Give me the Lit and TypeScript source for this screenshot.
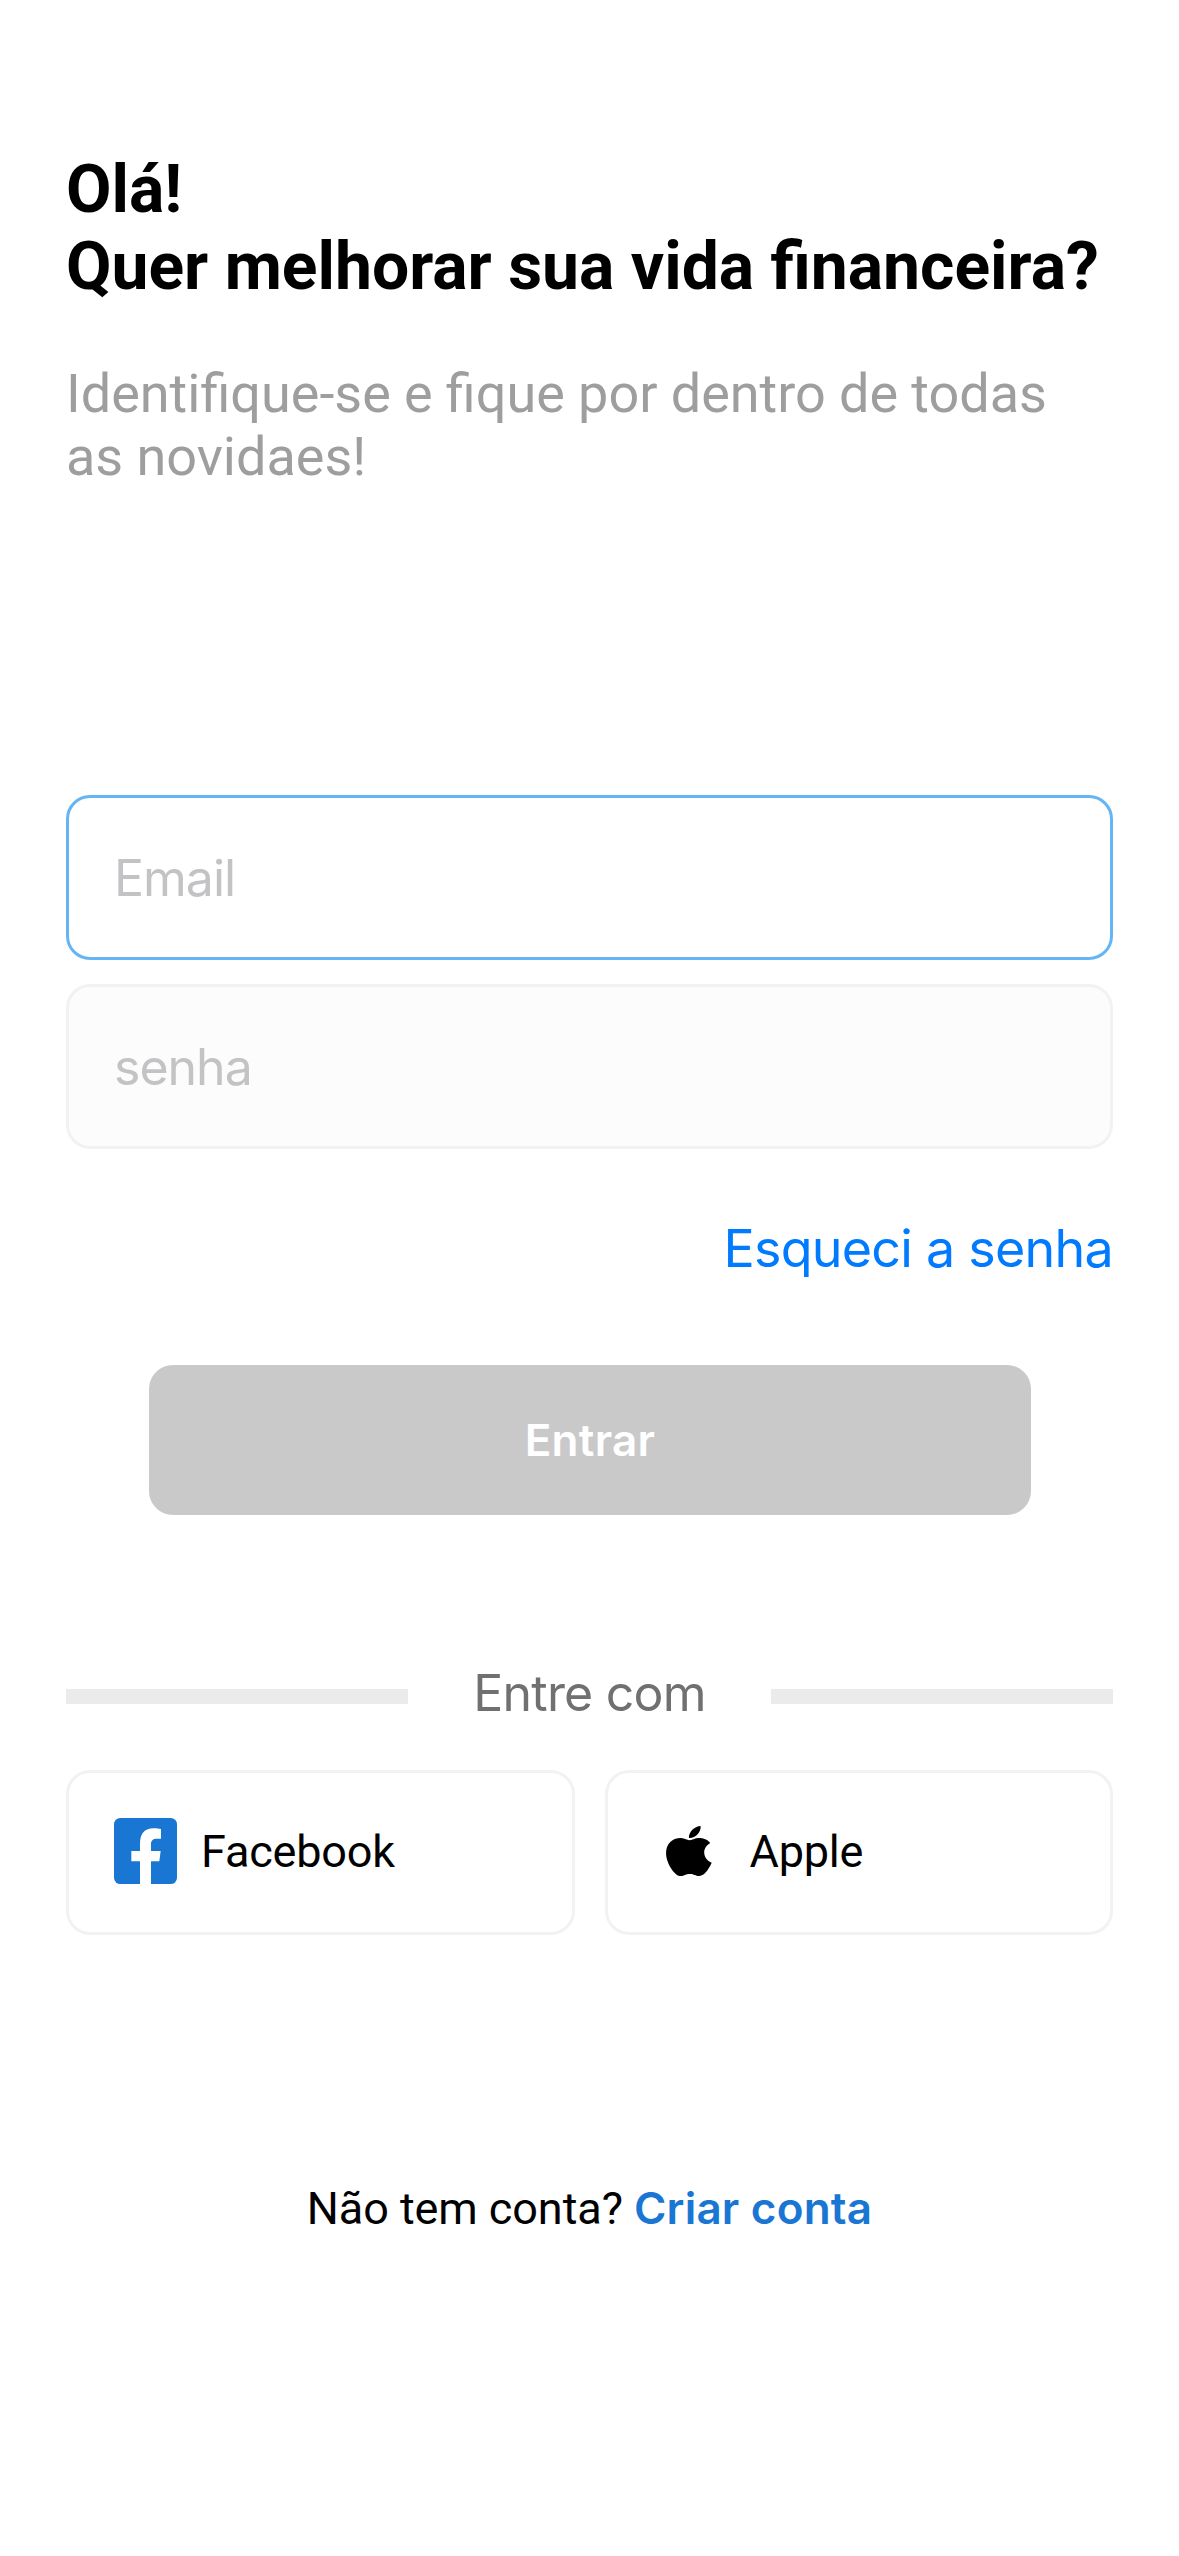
import { LitElement, html, css, svg } from "lit";
import { customElement, property } from "lit/decorators.js";

const facebookIcon = html`
  <svg width="63" height="66" viewBox="0 0 189 198" aria-hidden="true">
    ${svg`<rect width="189" height="198" rx="19" fill="#1976d2"/>
    <path fill="#fff" d="M78 198V130H52V99H78V76C78 46 93 31 119 31C128 31 135 31.8 141 33V62H129C116 62 111 68 111 78V99H140L136 130H111V198Z"/>`}
  </svg>
`;

const appleIcon = html`
  <svg width="73" height="66" viewBox="9 9 219 198" aria-hidden="true">
    ${svg`<path transform="translate(32.6 32.3) scale(7 6.28)" d="M12.152 6.896c-.948 0-2.415-1.078-3.96-1.04-2.04.027-3.91 1.183-4.961 3.014-2.117 3.675-.546 9.103 1.519 12.09 1.013 1.454 2.208 3.09 3.792 3.039 1.52-.065 2.09-.987 3.935-.987 1.831 0 2.35.987 3.96.948 1.637-.026 2.676-1.48 3.676-2.948 1.156-1.688 1.636-3.325 1.662-3.415-.039-.013-3.182-1.221-3.22-4.857-.026-3.04 2.48-4.494 2.597-4.559-1.429-2.09-3.623-2.324-4.39-2.376-2-.156-3.675 1.09-4.61 1.09z"/>
    <path transform="translate(30.2 33) scale(7.25 6.5)" d="M15.53 3.83c.843-1.012 1.4-2.427 1.245-3.83-1.207.052-2.662.805-3.532 1.818-.78.896-1.454 2.338-1.273 3.714 1.338.104 2.715-.688 3.559-1.701z"/>`}
  </svg>
`;

@customElement("text-field")
export class TextField extends LitElement {
  @property() placeholder = "";
  @property() type = "text";

  static styles = css`
    :host {
      display: block;
    }
    .input {
      display: block;
      box-sizing: border-box;
      width: 100%;
      height: 165px;
      margin: 0;
      padding: 0 45px;
      border: 3px solid #f2f2f2;
      border-radius: 24px;
      outline: none;
      background: #fcfcfc;
      color: #000;
      font: 400 50px Inter, "Liberation Sans", sans-serif;
      letter-spacing: -1px;
    }
    .input::placeholder {
      color: #c3c3c5;
      opacity: 1;
    }
    :host([active]) .input {
      border-color: #64b5f6;
      background: #fff;
    }
  `;

  render() {
    return html`<input class="input" type=${this.type} placeholder=${this.placeholder} />`;
  }
}

@customElement("social-button")
export class SocialButton extends LitElement {
  @property() label = "";

  static styles = css`
    :host {
      display: block;
    }
    .button {
      display: flex;
      align-items: center;
      gap: 24px;
      box-sizing: border-box;
      width: 100%;
      height: 165px;
      margin: 0;
      padding: 0 45px 3px;
      border: 3px solid #f2f2f2;
      border-radius: 24px;
      background: #fff;
      color: #000;
      font: 400 45px / 53px Roboto, sans-serif;
      letter-spacing: -0.2px;
    }
    .icon {
      display: flex;
    }
  `;

  render() {
    return html`
      <button class="button">
        <span class="icon"><slot></slot></span>
        <span>${this.label}</span>
      </button>
    `;
  }
}

@customElement("app-root")
export class AppRoot extends LitElement {
  static styles = css`
    :host {
      display: block;
    }
    .screen {
      display: flex;
      flex-direction: column;
      box-sizing: border-box;
      min-height: 2556px;
      padding: 151px 66px 0;
      background: #fff;
      color: #000;
      font-family: Roboto, sans-serif;
    }
    .title {
      margin: 0;
      font-size: 66px;
      font-weight: 700;
      line-height: 77px;
      white-space: nowrap;
    }
    .subtitle {
      margin: 57px 0 0;
      color: #9e9e9e;
      font-size: 54px;
      line-height: 63px;
      word-spacing: -0.2px;
    }
    .form {
      display: flex;
      flex-direction: column;
      gap: 24px;
      margin-top: 307px;
    }
    .forgot {
      align-self: flex-end;
      margin-top: 68px;
      color: #007aff;
      font: 400 52px / 64px Inter, "Liberation Sans", sans-serif;
      letter-spacing: -0.75px;
      text-decoration: none;
    }
    .submit {
      height: 150px;
      margin: 84px 82px 0 83px;
      padding: 0;
      border: 0;
      border-radius: 24px;
      background: #c9c9c9;
      color: #fff;
      font: 600 44px Inter, "Liberation Sans", sans-serif;
      letter-spacing: 0.3px;
    }
    .divider {
      display: grid;
      grid-template-columns: 342px 1fr 342px;
      align-items: center;
      margin-top: 148px;
    }
    .line {
      height: 15px;
      background: #ebebeb;
    }
    .divider-text {
      padding-bottom: 6px;
      color: #707070;
      font: 400 50px / 61px Inter, "Liberation Sans", sans-serif;
      letter-spacing: -0.8px;
      text-align: center;
      white-space: nowrap;
    }
    .social {
      display: grid;
      grid-template-columns: 1fr 1fr;
      gap: 30px;
      margin-top: 40px;
    }
    .signup {
      margin: 247px 0 0;
      font-size: 45px;
      line-height: 53px;
      letter-spacing: -0.08px;
      text-align: center;
    }
    .signup-link {
      color: #1976d2;
      font: 600 44px / 53px Inter, "Liberation Sans", sans-serif;
      letter-spacing: 0.2px;
      text-decoration: none;
    }
  `;

  render() {
    return html`
      <main class="screen">
        <h1 class="title">Olá!<br />Quer melhorar sua vida financeira?</h1>
        <p class="subtitle">Identifique-se e fique por dentro de todas as novidaes!</p>
        <div class="form">
          <text-field active placeholder="Email"></text-field>
          <text-field type="password" placeholder="senha"></text-field>
        </div>
        <a class="forgot">Esqueci a senha</a>
        <button class="submit">Entrar</button>
        <div class="divider">
          <span class="line"></span>
          <span class="divider-text">Entre com</span>
          <span class="line"></span>
        </div>
        <div class="social">
          <social-button label="Facebook">${facebookIcon}</social-button>
          <social-button label="Apple">${appleIcon}</social-button>
        </div>
        <p class="signup">Não tem conta? <a class="signup-link">Criar conta</a></p>
      </main>
    `;
  }
}
